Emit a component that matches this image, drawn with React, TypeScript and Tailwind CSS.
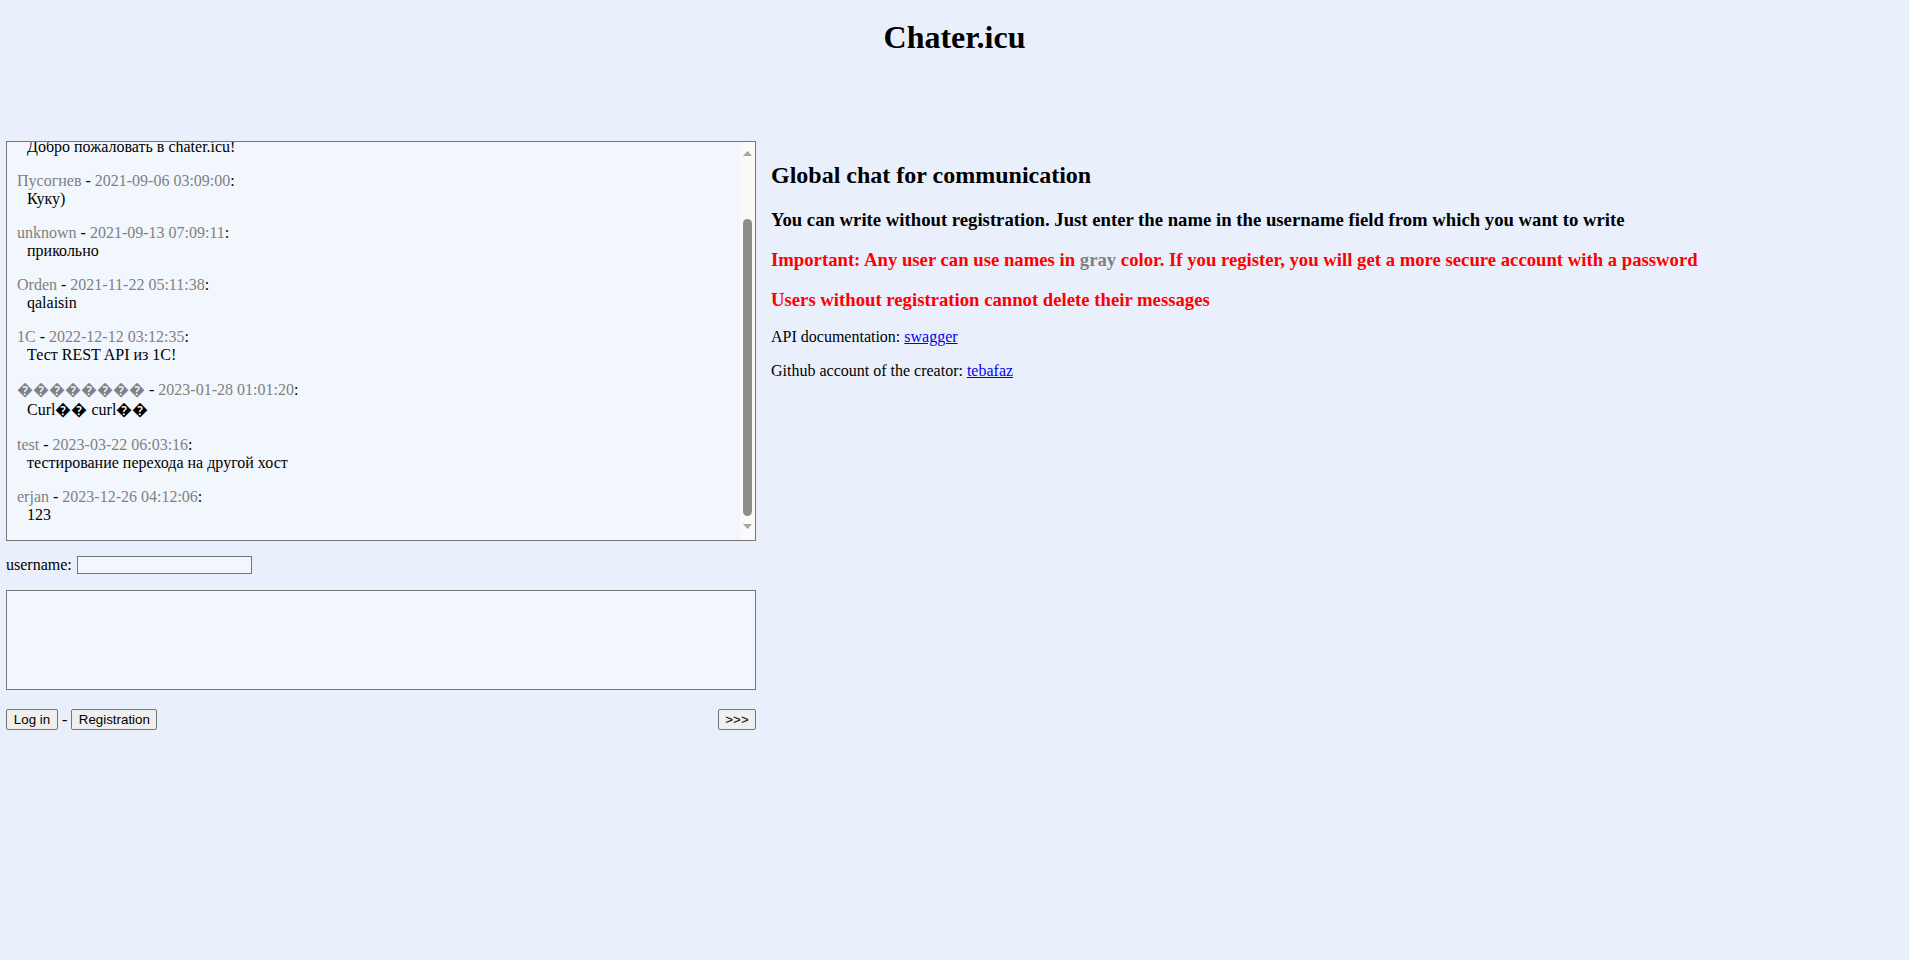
import React from "react";

type Message = {
  name: string;
  date: string;
  text: string;
  tall?: boolean;
};

const messages: Message[] = [
  { name: "admin", date: "2021-09-05 12:00:00", text: "Добро пожаловать в chater.icu!" },
  { name: "Пусогнев", date: "2021-09-06 03:09:00", text: "Куку)" },
  { name: "unknown", date: "2021-09-13 07:09:11", text: "прикольно" },
  { name: "Orden", date: "2021-11-22 05:11:38", text: "qalaisin" },
  { name: "1C", date: "2022-12-12 03:12:35", text: "Тест REST API из 1C!" },
  {
    name: "\uFFFD\uFFFD\uFFFD\uFFFD\uFFFD\uFFFD\uFFFD\uFFFD",
    date: "2023-01-28 01:01:20",
    text: "Curl\uFFFD\uFFFD curl\uFFFD\uFFFD",
    tall: true,
  },
  { name: "test", date: "2023-03-22 06:03:16", text: "тестирование перехода на другой хост" },
  { name: "erjan", date: "2023-12-26 04:12:06", text: "123" },
];

const Arrow = ({ down }: { down?: boolean }) => (
  <svg width="9" height="5" viewBox="0 0 9 5">
    <polygon points={down ? "0,0 9,0 4.5,5" : "0,5 4.5,0 9,5"} fill="#a3a3a3" />
  </svg>
);

const Button = ({ label, width }: { label: string; width: string }) => (
  <button
    type="button"
    className={`h-[21px] ${width} rounded-[2px] border border-[#767676] bg-[#efefef] text-center font-['Liberation_Sans',Arial,sans-serif] text-[13.33px] leading-[17px] text-black`}
  >
    {label}
  </button>
);

const App = () => {
  return (
    <div className="min-h-screen bg-[#eaf0fb] font-['Liberation_Serif','Times_New_Roman',serif] text-black">
      <h1 className="pt-[19px] text-center text-[32px] font-bold leading-[36px]">
        Chater.icu
      </h1>

      <div className="mt-[86px] flex items-start">
        {/* chat column */}
        <div className="ml-[6px] w-[750px] shrink-0">
          <div className="flex h-[400px] border border-[#767676] bg-[#f2f7fe]">
            <div className="flex flex-1 flex-col justify-end overflow-hidden pl-[10px] text-[16px]">
              {messages.map((m) => (
                <div key={m.date} className="mb-[16px]">
                  <div className={m.tall ? "leading-[20px]" : "leading-[18px]"}>
                    <span className="text-[#808080]">{m.name}</span> -{" "}
                    <span className="text-[#808080]">{m.date}</span>:
                  </div>
                  <div className={`pl-[10px] ${m.tall ? "leading-[20px]" : "leading-[18px]"}`}>
                    {m.text}
                  </div>
                </div>
              ))}
            </div>

            {/* scrollbar */}
            <div className="flex w-[15px] flex-col items-center bg-[#fafafa] pt-[9px]">
              <Arrow />
              <div className="mt-[63px] h-[297px] w-[9px] rounded-full bg-[#8c8c8c]" />
              <div className="mt-[8px]">
                <Arrow down />
              </div>
            </div>
          </div>

          <div className="mt-[15px] flex items-center text-[16px] leading-[18px]">
            <label htmlFor="username">username:</label>
            <input
              id="username"
              type="text"
              className="ml-[5px] h-[18px] w-[175px] border border-[#767676] bg-[#f2f7fe] outline-none"
            />
          </div>

          <textarea className="mt-[16px] block h-[100px] w-full resize-none border border-[#767676] bg-[#f2f7fe] outline-none" />

          <div className="mt-[19px] flex items-center justify-between">
            <div className="flex items-center">
              <Button label="Log in" width="w-[52px]" />
              <span className="px-[4px] text-[16px] leading-[18px]">-</span>
              <Button label="Registration" width="w-[86px]" />
            </div>
            <Button label=">>>" width="w-[38px]" />
          </div>
        </div>

        {/* info column */}
        <div className="ml-[15px]">
          <h2 className="mt-[20px] text-[24px] font-bold leading-[28px]">
            Global chat for communication
          </h2>
          <h3 className="mt-[20px] text-[18.72px] font-bold leading-[21.5px]">
            You can write without registration. Just enter the name in the username field from which you want to write
          </h3>
          <h3 className="mt-[18.72px] text-[18.72px] font-bold leading-[21.5px] text-[#ff0000]">
            Important: Any user can use names in{" "}
            <span className="text-[#808080]">gray</span> color. If you register, you will get a more secure account with a password
          </h3>
          <h3 className="mt-[18.72px] text-[18.72px] font-bold leading-[21.5px] text-[#ff0000]">
            Users without registration cannot delete their messages
          </h3>
          <p className="mt-[17px] text-[16px] leading-[18.4px]">
            API documentation:{" "}
            <a href="#" className="text-[#0000ee] underline">
              swagger
            </a>
          </p>
          <p className="mt-[16px] text-[16px] leading-[18.4px]">
            Github account of the creator:{" "}
            <a href="#" className="text-[#0000ee] underline">
              tebafaz
            </a>
          </p>
        </div>
      </div>
    </div>
  );
};

export default App;
